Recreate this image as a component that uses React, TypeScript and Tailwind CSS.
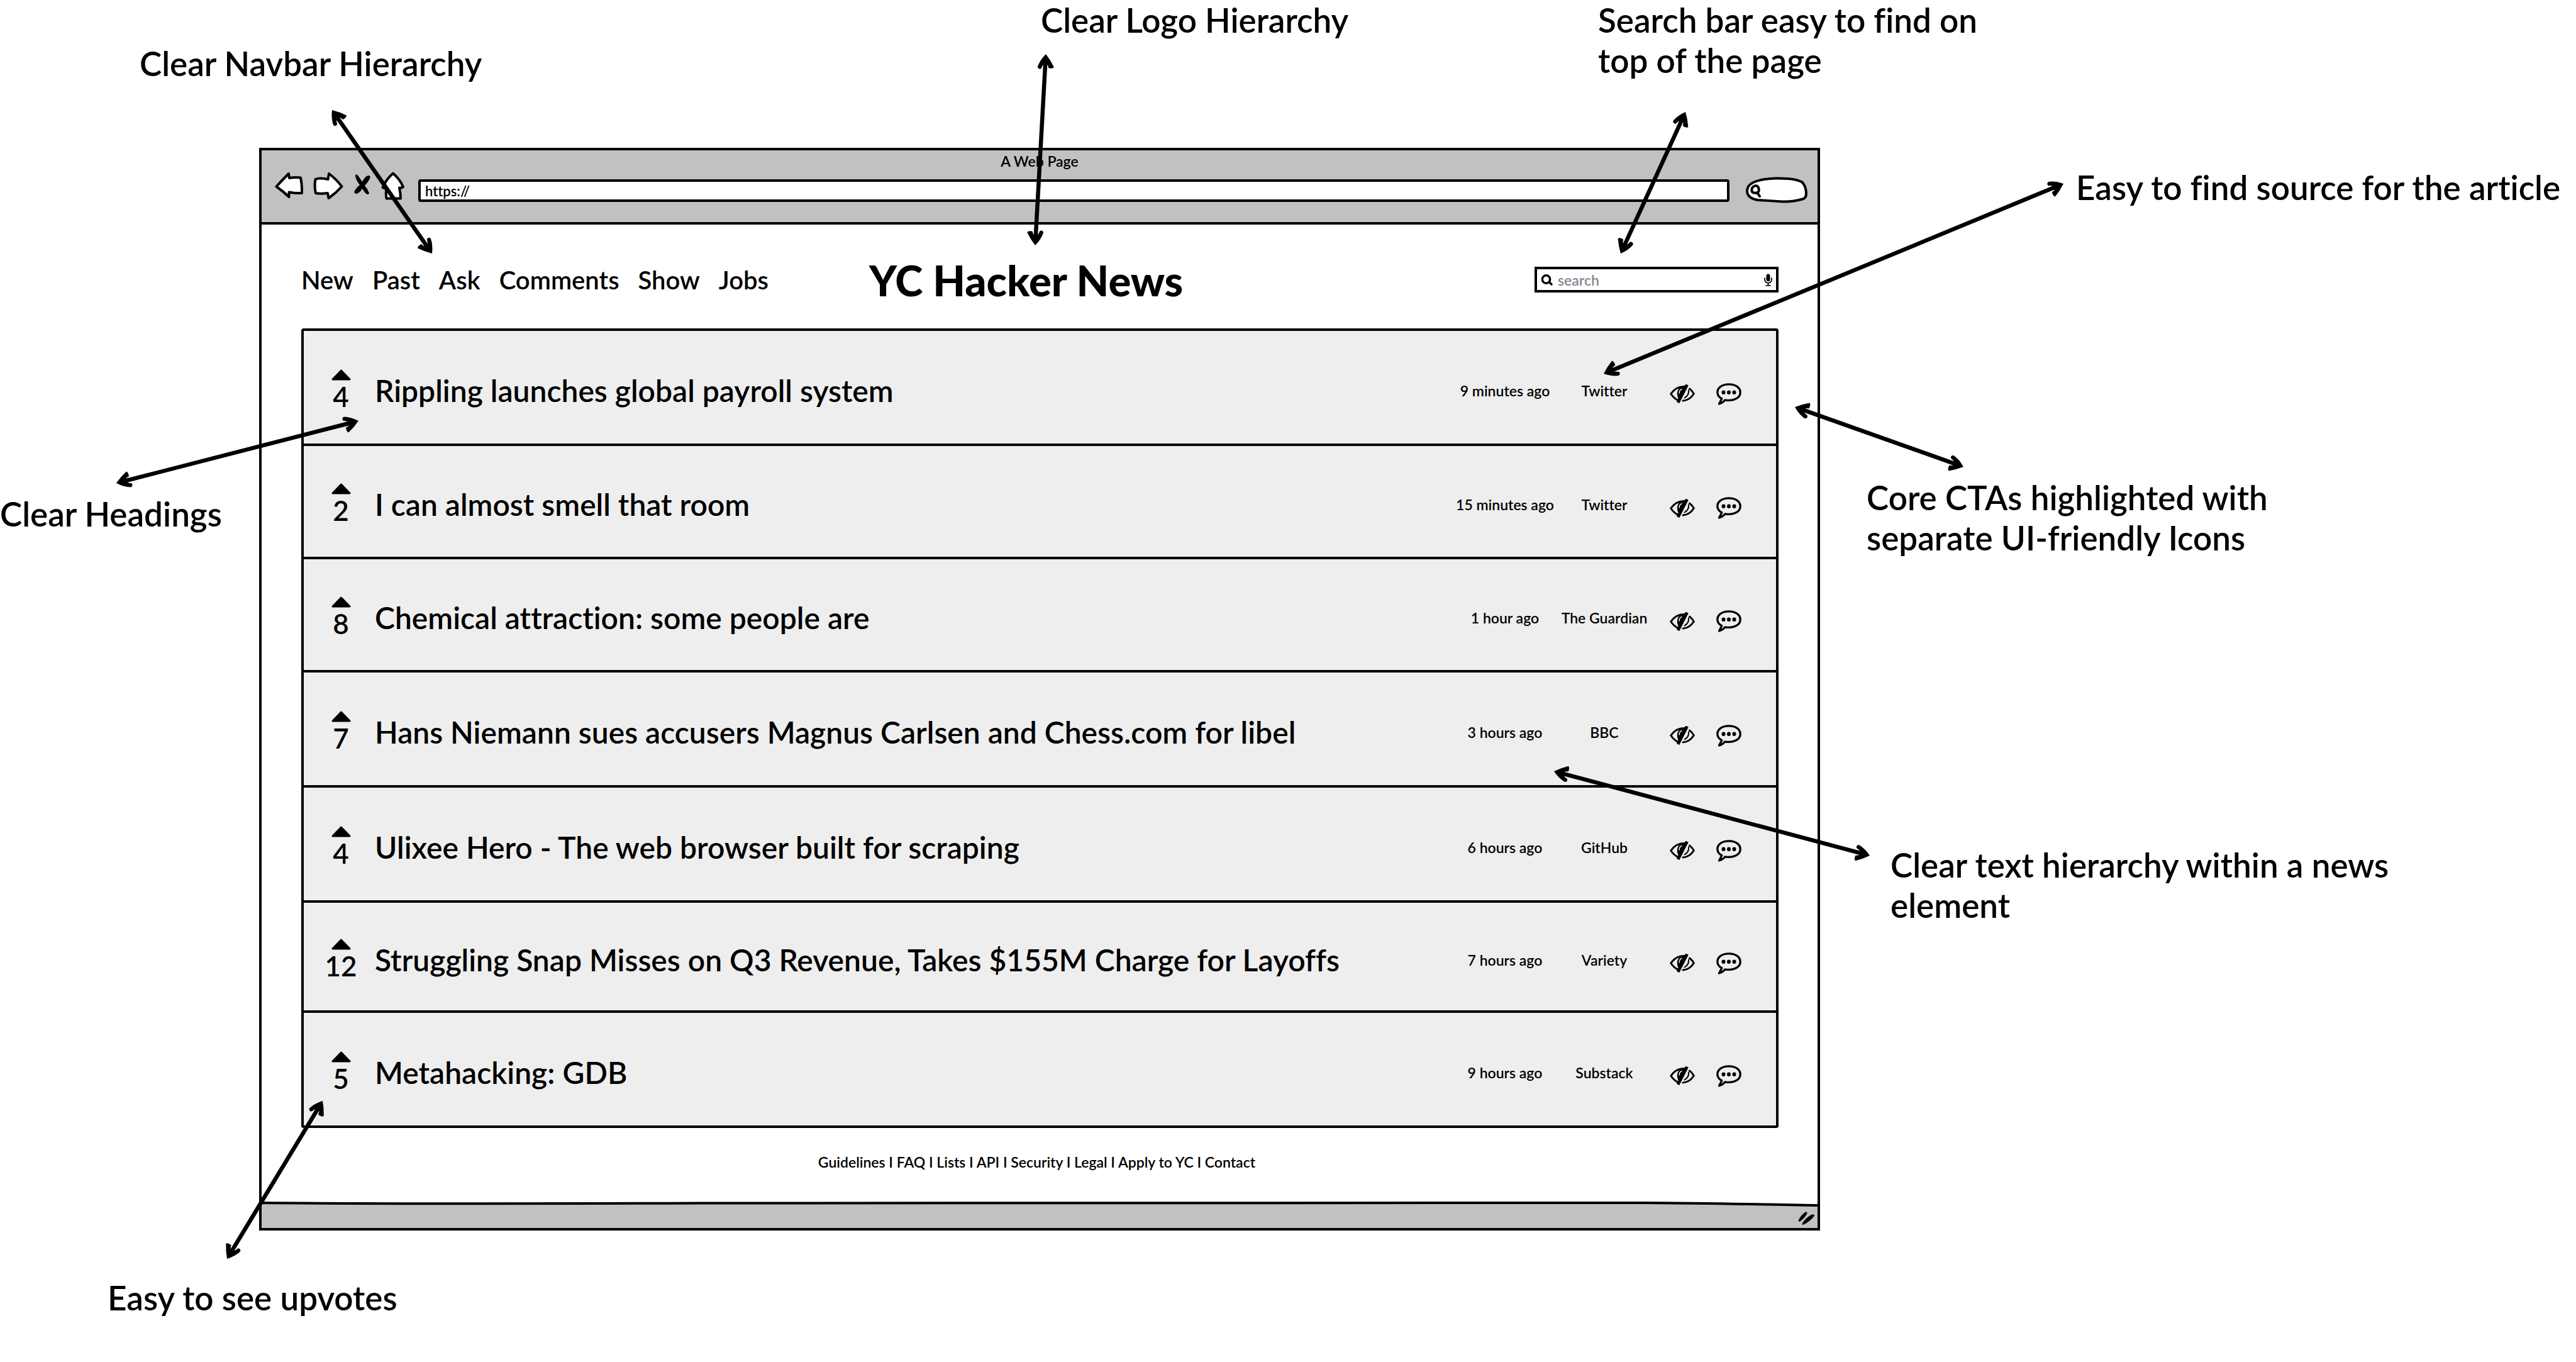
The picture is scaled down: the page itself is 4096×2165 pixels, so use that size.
import type { ReactNode } from "react";

type Story = {
  votes: number;
  title: string;
  time: string;
  source: string;
  height: string;
};

const stories: Story[] = [
  { votes: 4, title: "Rippling launches global payroll system", time: "9 minutes ago", source: "Twitter", height: "min-h-[183px]" },
  { votes: 2, title: "I can almost smell that room", time: "15 minutes ago", source: "Twitter", height: "min-h-[180px]" },
  { votes: 8, title: "Chemical attraction: some people are", time: "1 hour ago", source: "The Guardian", height: "min-h-[180px]" },
  { votes: 7, title: "Hans Niemann sues accusers Magnus Carlsen and Chess.com for libel", time: "3 hours ago", source: "BBC", height: "min-h-[183px]" },
  { votes: 4, title: "Ulixee Hero - The web browser built for scraping", time: "6 hours ago", source: "GitHub", height: "min-h-[183px]" },
  { votes: 12, title: "Struggling Snap Misses on Q3 Revenue, Takes $155M Charge for Layoffs", time: "7 hours ago", source: "Variety", height: "min-h-[175px]" },
  { votes: 5, title: "Metahacking: GDB", time: "9 hours ago", source: "Substack", height: "min-h-[183px]" },
];

const navItems = ["New", "Past", "Ask", "Comments", "Show", "Jobs"];

const footerLinks = ["Guidelines", "FAQ", "Lists", "API", "Security", "Legal", "Apply to YC", "Contact"];

const notes: { lines: string[]; place: string }[] = [
  { lines: ["Clear Navbar Hierarchy"], place: "left-[222px] top-[69px]" },
  { lines: ["Clear Logo Hierarchy"], place: "left-[1655px] top-0" },
  { lines: ["Search bar easy to find on", "top of the page"], place: "left-[2541px] top-0" },
  { lines: ["Easy to find source for the article"], place: "left-[3301px] top-[266px]" },
  { lines: ["Clear Headings"], place: "left-0 top-[785px]" },
  { lines: ["Core CTAs highlighted with", "separate UI-friendly Icons"], place: "left-[2968px] top-[759px]" },
  { lines: ["Clear text hierarchy within a news", "element"], place: "left-[3006px] top-[1343px]" },
  { lines: ["Easy to see upvotes"], place: "left-[171px] top-[2031px]" },
];

const arrows: [number, number, number, number][] = [
  [528, 175, 687, 403],
  [1663, 86, 1646, 390],
  [2680, 178, 2577, 403],
  [3281, 292, 2550, 594],
  [185, 768, 570, 669],
  [2854, 647, 3122, 742],
  [2471, 1226, 2973, 1360],
  [513, 1750, 361, 2001],
];

function ArrowHead({ x, y, angle }: { x: number; y: number; angle: number }) {
  return (
    <path
      transform={`translate(${x} ${y}) rotate(${angle})`}
      d="M0 0Q-10 -9 -21 -12Q-26 -10 -23 -6Q-19 -5 -17 -3L-17 4L-22 5.5Q-23 12 -20 14Q-9 8 0 0Z"
    />
  );
}

function Arrows() {
  return (
    <svg viewBox="0 0 4096 2165" className="pointer-events-none absolute inset-x-0 top-0 w-full" aria-hidden="true">
      {arrows.map(([x1, y1, x2, y2]) => {
        const angle = (Math.atan2(y2 - y1, x2 - x1) * 180) / Math.PI;
        const ux = Math.cos((angle * Math.PI) / 180) * 14;
        const uy = Math.sin((angle * Math.PI) / 180) * 14;
        return (
          <g key={`${x1}-${y1}`}>
            <line x1={x1 + ux} y1={y1 + uy} x2={x2 - ux} y2={y2 - uy} stroke="black" strokeWidth="6.5" />
            <ArrowHead x={x2} y={y2} angle={angle} />
            <ArrowHead x={x1} y={y1} angle={angle + 180} />
          </g>
        );
      })}
    </svg>
  );
}

function ToolButton({ label, width, children }: { label: string; width: string; children: ReactNode }) {
  return (
    <button type="button" aria-label={label} className={width}>
      {children}
    </button>
  );
}

function Toolbar() {
  return (
    <div className="border-b-4 border-black bg-[#c1c1c1] pb-[30px]">
      <p className="text-center text-[23px] leading-[34px]">A Web Page</p>
      <div className="flex items-start gap-4 pl-[21px] pr-[16px]">
        <ToolButton label="Back" width="w-[45px]">
          <svg viewBox="0 0 45 46" className="h-[46px] w-[45px]" fill="white" stroke="black" strokeWidth="4" strokeLinejoin="round">
            <path d="M2.5 23.5Q11 14 22 3L23 10Q32 8.500 41 9.500Q43.500 21 43 34Q33 34.500 22.500 32.500V40Q13 31 2.500 23.500Z" />
          </svg>
        </ToolButton>
        <ToolButton label="Forward" width="w-[48px]">
          <svg viewBox="0 0 48 46" className="h-[46px] w-[48px]" fill="white" stroke="black" strokeWidth="4" strokeLinejoin="round">
            <path d="M3.500 12Q10 9 23.500 12L25 3Q37 12 45.500 23.500Q36 34 24.500 42L23 34Q12 35.500 4 34Q1.500 23 3.500 12Z" />
          </svg>
        </ToolButton>
        <ToolButton label="Stop" width="w-[28px]">
          <svg viewBox="0 0 28 46" className="h-[46px] w-[28px]">
            <path d="M3 5Q5 3 8 7L14 16Q19 6 24 6Q28 6 26 11Q23 17 18 22Q23 28 25 34Q24 38 19 34L14 27Q9 35 4 35Q0 34 2 30Q6 24 10 21Q3 12 3 5Z" />
          </svg>
        </ToolButton>
        <ToolButton label="Home" width="w-[37px]">
          <svg viewBox="0 0 37 46" className="h-[46px] w-[37px]" fill="white" stroke="black" strokeWidth="4" strokeLinejoin="round">
            <path d="M19 2.500Q30 12 35 24Q33 26 29 25.500Q31 34 31 42.500H8.500Q7 34 8.500 27Q5 27 2.500 25Q8 12 19 2.500Z" />
          </svg>
        </ToolButton>
        <input
          aria-label="Address"
          defaultValue="https://"
          className="mt-[12px] ml-1.5 h-[36px] min-w-0 flex-1 rounded-[4px] border-4 border-black bg-white pl-[7px] text-[22px] leading-[28px] outline-none"
        />
        <label className="relative mt-[8px] ml-2.5 block h-[42px] w-[98px]">
          <svg viewBox="0 0 98 42" className="h-[42px] w-[98px]" fill="none" stroke="black" strokeWidth="4" strokeLinecap="round" aria-hidden="true">
            <path fill="white" d="M19 37Q2 34 2 22.500Q2 4 48 2.500Q80 2 90 9Q96 16 96 27Q96 34 90 35.500Q75 40 58 39.500Q38 38 19 37Z" />
            <path d="M11.500 16Q17 12 20 17Q22 23 19 25Q13 27 10 24Q8 19 11.500 16ZM18 25L22 31" />
          </svg>
          <input aria-label="Browser search" className="absolute inset-y-0 right-3 left-7 w-14 bg-transparent outline-none" />
        </label>
      </div>
    </div>
  );
}

function Header() {
  return (
    <header className="flex h-[165px] items-center pt-[10px]">
      <nav className="flex gap-[30px] text-[40px] leading-[48px]">
        {navItems.map((item) => (
          <a key={item} href="#">
            {item}
          </a>
        ))}
      </nav>
      <h1 className="ml-[160px] text-[67px] leading-[72px] font-black whitespace-nowrap">YC Hacker News</h1>
      <label className="ml-auto flex h-[41px] w-[388px] items-center border-4 border-black bg-white px-[6px]">
        <svg viewBox="0 0 19 18" className="h-[18px] w-[19px] shrink-0" fill="none" stroke="black" strokeWidth="3.4" strokeLinecap="round" aria-hidden="true">
          <circle cx="8.500" cy="8" r="6.200" />
          <path d="M13.500 12.500L17 16" />
        </svg>
        <input
          type="text"
          aria-label="Search stories"
          placeholder="search"
          className="ml-[8px] min-w-0 flex-1 bg-transparent text-[23px] leading-[28px] outline-none placeholder:text-[#868690]"
        />
        <svg viewBox="0 0 13 20" className="h-[20px] w-[13px] shrink-0" fill="none" stroke="black" strokeWidth="1.700" strokeLinecap="round" aria-hidden="true">
          <rect x="3.500" y="0.500" width="6" height="12" rx="3" fill="black" stroke="none" />
          <path d="M1 7V9.500A5.500 5.500 0 0 0 12 9.500V7M6.500 15V19M3 19H10" />
        </svg>
      </label>
    </header>
  );
}

function HideIcon() {
  return (
    <svg viewBox="0 0 40 30" className="h-[30px] w-[40px]" fill="none" stroke="black" strokeWidth="3" strokeLinecap="round" aria-hidden="true">
      <path d="M24 3.500C14 3 7 7.500 1.800 15C5 20 9 23.500 13.500 25.500" />
      <path fill="black" stroke="none" d="M26 3C17 2.500 11.800 8 11.800 14C11.800 19 13 22 15.500 25Z" />
      <path stroke="#eeeeee" strokeWidth="1.500" d="M19 7.500C16.500 8.500 15 11 15.200 14" />
      <path strokeWidth="5" strokeLinecap="butt" d="M27.500 0.500L13 29" />
      <path d="M31.500 7C35 9.500 37 12.500 38.300 15C34 21.500 28 25.500 21 26" />
      <path strokeWidth="2" d="M30 9.500C30.500 14.500 28 19 23.500 21.500" />
    </svg>
  );
}

function CommentIcon() {
  return (
    <svg viewBox="0 0 40 35" className="h-[35px] w-[40px]" fill="none" stroke="black" strokeWidth="3.300" strokeLinejoin="round" aria-hidden="true">
      <path d="M14 26.800C16 27.300 18 27.400 20 27.400C30.500 27.400 38.200 22.500 38.200 14.800C38.200 7 30.500 1.800 20 1.800C9.500 1.800 1.800 7 1.800 14.800C1.800 19 4.500 22.500 8.800 24.800L4.500 33C8.500 32 11.500 30 14 26.800Z" />
      <g fill="black" stroke="none">
        <ellipse cx="11.500" cy="14.800" rx="3" ry="3.200" />
        <ellipse cx="20" cy="14.800" rx="3" ry="3.200" />
        <ellipse cx="28.500" cy="14.800" rx="3" ry="3.200" />
      </g>
    </svg>
  );
}

function StoryRow({ votes, title, time, source, height }: Story) {
  return (
    <li className={`flex items-center border-t-4 border-black pt-[10px] pr-[55px] pl-[29px] ${height}`}>
      <button type="button" aria-label={`Upvote ${title}`} className="mb-[8px] flex w-[60px] flex-col items-center gap-[9px]">
        <svg viewBox="0 0 31 18" className="h-[18px] w-[31px]" stroke="black" strokeWidth="3" strokeLinejoin="round" aria-hidden="true">
          <path d="M15.500 2L29 16H2Z" />
        </svg>
        <span className="text-[44px] leading-[33px]">{votes}</span>
      </button>
      <a href="#" className="ml-[24px] flex-1 text-[48px] leading-[56px]">
        {title}
      </a>
      <span className="w-[170px] text-center text-[23px] leading-[28px]">{time}</span>
      <a href="#" className="w-[146px] text-center text-[23px] leading-[28px]">
        {source}
      </a>
      <div className="mt-[11px] ml-[31px] flex items-center gap-[34px]">
        <button type="button" aria-label="Hide story">
          <HideIcon />
        </button>
        <button type="button" aria-label="Comments">
          <CommentIcon />
        </button>
      </div>
    </li>
  );
}

function Footer() {
  return (
    <footer className="flex h-[115px] items-center justify-center pr-[10px] pb-[8px] text-[23px] leading-[28px]">
      <p>
        {footerLinks.map((link, index) => (
          <span key={link}>
            {index > 0 && " I "}
            <a href="#">{link}</a>
          </span>
        ))}
      </p>
    </footer>
  );
}

function StatusBar() {
  return (
    <div className="relative flex h-[44px] items-end justify-end bg-[#c1c1c1] pr-[4px] pb-[4px]">
      <svg viewBox="0 0 2474 12" preserveAspectRatio="none" className="absolute inset-x-0 top-0 h-[12px] w-full" aria-hidden="true">
        <path fill="white" d="M0 0V4Q200 6 700 4.500L2200 4Q2400 6 2474 8V0Z" />
        <path fill="none" stroke="black" strokeWidth="4" d="M0 4Q200 6 700 4.500L2200 4Q2400 6 2474 8" />
      </svg>
      <svg viewBox="0 0 27 22" className="h-[22px] w-[27px]" aria-hidden="true">
        <path d="M1 13Q5 5 12 0.500Q15 0 14.500 3Q10 11 2.500 16Q0 16 1 13ZM7 18Q13 9 22 4.500Q27 4 26 6.500Q19 16 8 21Q6 21 7 18Z" />
      </svg>
    </div>
  );
}

export default function App() {
  return (
    <div className="relative min-h-screen overflow-hidden bg-white pt-[235px] pr-[1202px] pl-[412px] font-['Lato',sans-serif] font-semibold text-black [font-variant-ligatures:none]">
      <main className="border-4 border-black bg-white">
        <Toolbar />
        <div className="pr-[62px] pl-[63px]">
          <Header />
          <ul className="rounded-[4px] border-x-4 border-b-4 border-black bg-[#eeeeee]">
            {stories.map((story) => (
              <StoryRow key={story.title} {...story} />
            ))}
          </ul>
          <Footer />
        </div>
        <StatusBar />
      </main>

      {notes.map(({ lines, place }) => (
        <p key={lines[0]} className={`absolute text-[53px] leading-[64px] whitespace-nowrap ${place}`}>
          {lines.map((line) => (
            <span key={line} className="block">
              {line}
            </span>
          ))}
        </p>
      ))}
      <Arrows />
    </div>
  );
}
